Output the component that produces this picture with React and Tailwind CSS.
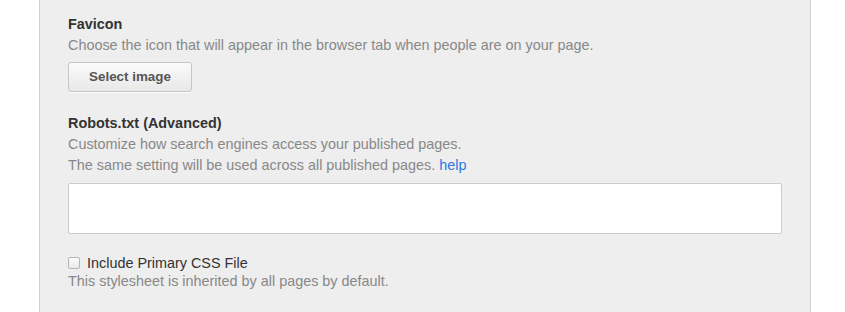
export default function App() {
  return (
    <div className="min-h-[312px] bg-white font-['Liberation_Sans',Arial,sans-serif]">
      <div className="ml-[39px] min-h-[312px] w-[772px] border-x border-[#cfcfcf] bg-[#eeeeee] pl-[28px] pr-[28px] pt-[14px]">
        {/* Favicon */}
        <h3 className="text-[14.4px] font-bold leading-[20px] text-[#333]">Favicon</h3>
        <p className="mt-[1px] text-[14.4px] leading-[21px] text-[#888]">
          Choose the icon that will appear in the browser tab when people are on your page.
        </p>
        <button className="mt-[6px] flex h-[30px] w-[124px] items-center justify-center rounded-[3px] border border-[#c6c6c6] bg-gradient-to-b from-[#fbfbfb] to-[#e8e8e8] text-[13.4px] font-bold text-[#555] shadow-[0_1px_0_rgba(255,255,255,0.8)]">
          Select image
        </button>

        {/* Robots */}
        <h3 className="mt-[21px] text-[14.4px] font-bold leading-[20px] text-[#333]">Robots.txt (Advanced)</h3>
        <p className="mt-[1px] text-[14.4px] leading-[21px] text-[#888]">
          Customize how search engines access your published pages.
        </p>
        <p className="text-[14.4px] leading-[21px] text-[#888]">
          The same setting will be used across all published pages.{' '}
          <a className="text-[#2a7ae2]">help</a>
        </p>
        <textarea className="mt-[7px] block h-[51px] w-full resize-none rounded-[2px] border border-[#cccccc] bg-white" />

        {/* Primary CSS */}
        <label className="mt-[20px] flex items-center gap-[7px] text-[14.4px] leading-[18px] text-[#333]">
          <span className="h-[12px] w-[12px] rounded-[2px] border border-[#b5b5b5] bg-gradient-to-b from-[#fdfdfd] to-[#e9e9e9]" />
          Include Primary CSS File
        </label>
        <p className="text-[14.4px] leading-[18px] text-[#888]">This stylesheet is inherited by all pages by default.</p>
      </div>
    </div>
  )
}
